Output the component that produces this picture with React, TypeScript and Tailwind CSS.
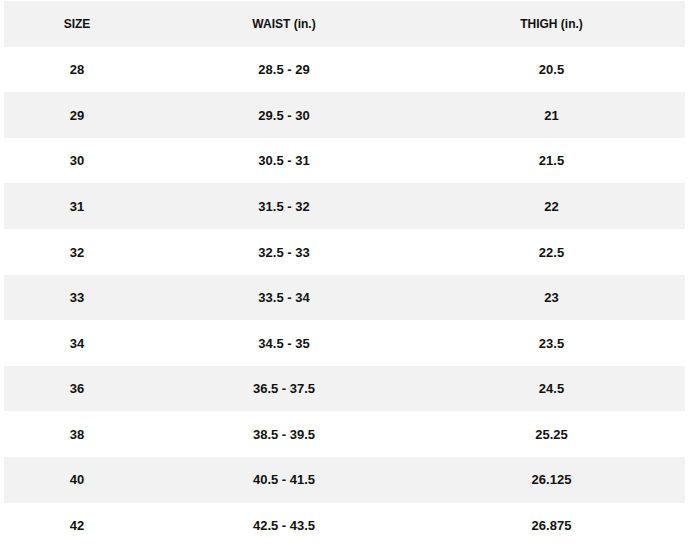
import React from 'react';

const rows: [string, string, string][] = [
  ['28', '28.5 - 29', '20.5'],
  ['29', '29.5 - 30', '21'],
  ['30', '30.5 - 31', '21.5'],
  ['31', '31.5 - 32', '22'],
  ['32', '32.5 - 33', '22.5'],
  ['33', '33.5 - 34', '23'],
  ['34', '34.5 - 35', '23.5'],
  ['36', '36.5 - 37.5', '24.5'],
  ['38', '38.5 - 39.5', '25.25'],
  ['40', '40.5 - 41.5', '26.125'],
  ['42', '42.5 - 43.5', '26.875'],
];

const App: React.FC = () => {
  return (
    <div className="min-h-[550px] bg-white pt-px pl-1 font-['Liberation_Sans',Arial,sans-serif]">
      <table className="w-[681px] border-collapse font-bold text-[#111] table-fixed">
        <colgroup>
          <col className="w-[146px]" />
          <col className="w-[268px]" />
          <col className="w-[267px]" />
        </colgroup>
        <thead>
          <tr className="h-[45.6px] bg-[#f2f2f2] text-[12px]">
            <th className="text-center font-bold p-0">SIZE</th>
            <th className="text-center font-bold p-0">WAIST (in.)</th>
            <th className="text-center font-bold p-0">THIGH (in.)</th>
          </tr>
        </thead>
        <tbody className="text-[13px]">
          {rows.map((r, i) => (
            <tr key={r[0]} className={`h-[45.6px] ${i % 2 === 1 ? 'bg-[#f2f2f2]' : 'bg-white'}`}>
              <td className="text-center p-0 pt-px">{r[0]}</td>
              <td className="text-center p-0 pt-px">{r[1]}</td>
              <td className="text-center p-0 pt-px">{r[2]}</td>
            </tr>
          ))}
        </tbody>
      </table>
    </div>
  );
};

export default App;
